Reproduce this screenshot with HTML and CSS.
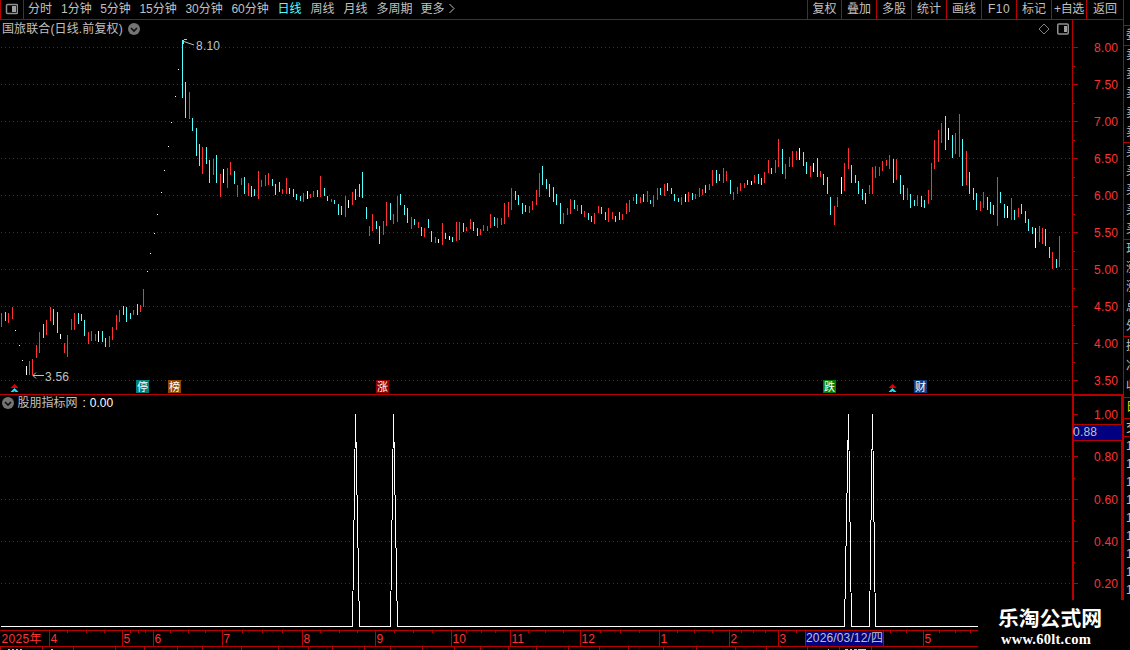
FILE: index.html
```
<!DOCTYPE html>
<html lang="zh-CN">
<head>
<meta charset="utf-8">
<title>国旅联合</title>
<link rel="stylesheet" href="styles.css">
</head>
<body>
<div class="app">
  <div class="terminal">
    <header class="toolbar">
      <div class="toggle"><svg width="13" height="12" viewBox="0 0 13 12"><rect x="1.5" y="1.5" width="11" height="9" rx="1" class="icon-frame"/><rect x="7" y="3" width="4" height="6" class="icon-fill"/></svg></div>
      <nav class="periods">
        <span class="w24">分时</span><span class="w30">1分钟</span><span class="w30">5分钟</span><span class="w37">15分钟</span><span class="w37">30分钟</span><span class="w37">60分钟</span><span class="w24 active">日线</span><span class="w24">周线</span><span class="w24">月线</span><span class="w36">多周期</span><span class="w24 more">更多</span>
        <svg class="chevron" width="6" height="11" viewBox="0 0 6 11"><path d="M0.5 1L5 5.5L0.5 10"/></svg>
      </nav>
      <nav class="actions"><span class="first">复权</span><span>叠加</span><span>多股</span><span>统计</span><span>画线</span><span class="latin">F10</span><span>标记</span><span class="tight">+自选</span><span class="last">返回</span></nav>
    </header>

    <section class="panel price">
      <svg class="plot" id="price" width="1123" height="375" viewBox="0 20 1123 375">
        <g id="price-grid"></g>
        <path class="axis" d="M1072.5 20V394M0 394.5H1123"/>
        <g id="bars"></g>
        <path class="pointer" d="M184 39.5H187M183.5 40V44M184 41.5L194 45M44 375.5H33M36 372.5L33 375.5L36 378.5"/>
        <text class="note" x="196" y="50" textLength="24">8.10</text>
        <text class="note" x="45" y="381" textLength="24">3.56</text>
        <g id="flags"></g>
        <g id="events"></g>
      </svg>
      <div class="caption">
        <span class="stock">国旅联合(日线.前复权)</span>
        <svg class="drop" width="12" height="12" viewBox="0 0 12 12"><circle cx="6" cy="6" r="6"/><path d="M3 5L6 8L9 5"/></svg>
        <svg class="diamond" width="12" height="12" viewBox="0 0 12 12"><path d="M6 1L11 6L6 11L1 6Z"/></svg>
        <svg width="12" height="12" viewBox="0 0 12 12"><rect x="0.75" y="1" width="10.5" height="10" rx="1" class="icon-frame"/><rect x="7" y="3" width="3" height="6" class="icon-fill"/></svg>
      </div>
    </section>

    <section class="panel signal">
      <svg class="plot" id="signal" width="1123" height="235" viewBox="0 395 1123 235">
        <g id="signal-grid"></g>
        <path class="axis thick" d="M1073 395V600M1122 395V600"/>
        <path class="axis" d="M1072 395.5H1123"/>
        <rect class="select" x="1074" y="425" width="48" height="15"/>
        <path class="axis" d="M1074 424.5H1122M1074 440.5H1122"/>
        <text class="value" x="1073" y="436" textLength="24">0.88</text>
        <polyline class="series" points="1,626.5 352.5,626.5 355.5,414 359.5,626.5 390.5,626.5 393.5,414 397.5,626.5 844.5,626.5 848.5,414 851.5,626.5 869.5,626.5 872.5,414 875.5,626.5 978,626.5"/>
      </svg>
      <div class="caption formula">
        <svg class="drop" width="12" height="12" viewBox="0 0 12 12"><circle cx="6" cy="6" r="6"/><path d="M3 5L6 8L9 5"/></svg>
        <span>股朋指标网</span><span class="colon">:</span><span class="result">0.00</span>
      </div>
    </section>

    <footer class="bottom">
      <svg class="plot" id="dates" width="978" height="20" viewBox="0 630 978 20">
        <path class="axis" d="M0 630.5H978M0 646.5H978"/>
        <g id="date-ticks"></g>
        <rect class="select" x="806" y="631" width="77" height="15"/>
        <text class="value" x="806" y="642" textLength="77">2026/03/12/四</text>
        <path class="sliver" d="M8 649.5H10M12 649.5H14M16 649.5H18M20 649.5H22M51 649.5H53M828 649.5H829"/>
        <path class="sliver cyan" d="M845 649.5H848M850 649.5H852M854 649.5H857M858 649.5H866"/>
      </svg>
    </footer>
  </div>

  <aside class="quotes">
    <div class="blank"></div>
    <div class="group one"><b>委</b></div>
    <div class="group five"><b>卖</b><b>卖</b><b>卖</b><b>卖</b><b>卖</b></div>
    <div class="group five"><b>买</b><b>买</b><b>买</b><b>买</b><b>买</b></div>
    <div class="group five"><b>现</b><b>涨</b><b>涨</b><b>总</b><b>外</b></div>
    <div class="group three"><b>换</b><b>净</b><b>收</b></div>
    <div class="group tab"><b>日</b></div>
    <div class="group head"><b>交</b></div>
    <div class="ticks"><b>1</b><b>1</b><b>1</b><b>1</b><b>1</b><b>1</b><b>1</b><b>1</b><b>1</b></div>
  </aside>

  <div class="brand"><div class="brand-name">乐淘公式网</div><div class="brand-url">www.60lt.com</div></div>
</div>
<script src="chart.js"></script>
</body>
</html>
```
FILE: styles.css
```
* { box-sizing: border-box; }
body {
  margin: 0;
  background: #000;
  color: #c0c0c0;
  font: 12px/16px "Liberation Sans", "Noto Sans CJK SC", sans-serif;
  overflow: hidden;
}
svg { display: block; flex: none; }
.app { position: relative; display: flex; width: 1130px; height: 650px; overflow: hidden; }
.terminal { width: 1123px; flex: none; }

.toolbar { display: flex; height: 20px; border-bottom: 1px solid #b80000; white-space: nowrap; }
.toggle { width: 24px; padding: 3px 0 0 4px; border: solid #b80000; border-width: 0 1px; }
.periods { display: flex; gap: 9px; padding: 1px 0 0 4px; }
.periods .w24 { width: 24px; }
.periods .w30 { width: 30.2px; }
.periods .w36 { width: 36px; }
.periods .w37 { width: 37px; }
.periods .active { color: #54ffff; }
.periods .more { margin-left: -1px; }
.chevron { margin: 2px 0 0 -4px; }
.chevron path { fill: none; stroke: #c0c0c0; }
.icon-frame { fill: none; stroke: #909090; stroke-width: 1.5; }
.icon-fill { fill: #a0a0a0; }
.actions { display: flex; margin-left: auto; }
.actions span { width: 35px; padding-top: 1px; border-left: 1px solid #b80000; text-align: center; }
.actions .first { width: 34px; }
.actions .latin { letter-spacing: .5px; }
.actions .tight { letter-spacing: -.3px; }
.actions .last { width: 37px; }

.panel { display: grid; }
.panel > * { grid-area: 1 / 1; }
.price { height: 375px; }
.signal { height: 235px; }
.caption { display: flex; align-items: center; align-self: start; height: 18px; padding-left: 2px; z-index: 1; }
.stock { width: 120px; margin-right: 6px; letter-spacing: .12px; white-space: nowrap; }
.drop circle { fill: #747474; }
.drop path { fill: none; stroke: #101010; stroke-width: 1.7; }
.diamond { margin: 0 7px 0 auto; }
.diamond path { fill: none; stroke: #808080; }
.price .caption { padding-right: 54px; }
.formula { height: 16px; }
.formula .drop { margin-right: 3.5px; }
.formula .colon { margin: 0 4px 0 5px; color: #fff; }
.formula .result { color: #fff; }

.axis { fill: none; stroke: #b80000; shape-rendering: crispEdges; }
.thick { stroke-width: 2; }
.grid { stroke: #a00808; stroke-dasharray: 1 3; shape-rendering: crispEdges; }
.up { fill: #ff3232; }
.down { fill: #54ffff; }
.flat { fill: #fff; }
.bar { shape-rendering: crispEdges; }
.scale { fill: #ff3232; font-size: 12px; }
.note, .value { fill: #c0c0c0; font-size: 12px; }
.pointer { fill: none; stroke: #c0c0c0; }
.select { fill: #000080; }
.series { fill: none; stroke: #fff; shape-rendering: crispEdges; }
.flag { fill: #fff; font: 11px "Noto Sans CJK SC", sans-serif; }
.sliver { stroke: #c0c0c0; shape-rendering: crispEdges; }
.cyan { stroke: #54ffff; }
.bottom { height: 20px; }

.quotes { width: 7px; height: 600px; border-left: 1px solid #b80000; overflow: hidden; }
.quotes b { display: block; flex: 1; width: 20px; padding-left: 2px; font-weight: 400; line-height: 18px; }
.blank { height: 25px; }
.group { display: flex; flex-direction: column; border-top: 1px solid #b80000; }
.one { height: 20px; }
.five { height: 97px; }
.three { height: 61px; }
.tab { height: 21px; }
.tab b { color: #e0e000; }
.head { height: 19px; border-bottom: 1px solid #b80000; }
.ticks b { height: 18px; }

.brand { position: absolute; left: 978px; top: 600px; width: 152px; height: 50px; padding: 7px 0 0 20px; color: #fff; white-space: nowrap; background: #000; }
.brand-name { font: bold 20.8px/21px "Noto Sans CJK SC", sans-serif; }
.brand-url { padding: 3px 0 0 3px; letter-spacing: .25px; font: bold 14.5px/16px "Liberation Serif", serif; }
```
FILE: chart.js
```
const NS = "http://www.w3.org/2000/svg";
function add(parent, name, attrs, text) {
  const el = document.createElementNS(NS, name);
  for (const key in attrs) el.setAttribute(key, attrs[key]);
  if (text !== undefined) el.textContent = text;
  document.getElementById(parent).appendChild(el);
}

// Each bar: column, high, low, direction (r = up, c = down, w = flat)
const bars = `
1 313 327 r,5 312 321 c,8 313 323 r,12 307 319 r,15 330 331 w,19 345 346 w,22 360 361 w,26 366 375 w,29 361 375 r,32 359 375 r,
36 345 358 r,39 332 353 r,43 324 338 c,46 320 335 r,50 307 321 r,53 309 325 c,57 312 333 c,60 334 339 w,64 343 353 r,67 335 357 r,
71 319 330 r,74 313 330 r,78 313 324 c,81 314 321 c,84 320 336 c,88 332 344 r,91 331 341 r,95 334 341 r,98 331 342 w,102 331 342 c,
105 338 347 c,109 336 347 r,112 327 340 r,116 315 330 r,119 310 322 r,123 306 315 c,126 307 322 c,130 313 319 c,133 310 315 r,137 304 315 c,
140 305 312 r,143 289 307 r,147 271 272 w,150 253 254 w,154 233 234 w,157 214 215 w,161 192 193 w,164 170 171 w,168 146 147 w,171 122 123 w,
175 96 97 w,178 69 70 w,182 40 98 c,185 82 118 c,189 92 119 r,192 118 131 c,196 128 156 c,199 144 166 c,202 147 174 r,206 147 164 c,
209 160 183 c,213 159 175 r,216 155 183 c,220 174 197 r,223 169 183 w,227 168 188 r,230 162 175 r,234 171 184 c,237 185 197 r,241 178 185 r,
244 177 194 c,248 183 196 r,251 186 197 c,254 189 196 c,258 171 199 r,261 180 187 r,265 175 186 r,268 173 185 r,272 179 186 c,275 184 195 c,
279 182 192 c,282 189 194 r,286 178 194 r,289 188 194 c,293 189 197 c,296 194 200 c,300 196 201 c,303 193 202 r,307 191 199 w,310 194 198 r,
313 191 197 r,317 190 197 c,320 176 197 r,324 188 196 c,327 196 201 c,331 199 202 r,334 200 204 c,338 204 215 c,341 206 215 c,345 196 217 r,
348 200 208 w,352 192 205 r,355 189 200 c,359 184 197 c,362 172 198 c,366 207 219 c,369 226 236 r,372 214 231 r,376 221 229 c,379 226 244 c,
383 221 235 r,386 202 226 r,390 203 220 c,393 214 224 r,397 196 222 r,400 194 205 c,404 205 215 c,407 208 223 c,411 217 229 r,414 219 225 c,
418 222 228 r,421 227 236 c,424 228 237 r,428 219 228 c,431 231 242 c,435 237 243 r,438 239 243 w,442 223 245 r,445 233 239 c,449 236 240 w,
452 237 242 c,456 222 241 r,459 222 240 r,463 223 232 c,466 227 231 r,470 219 229 r,473 222 231 c,477 228 236 c,480 229 235 r,483 225 231 r,
487 226 231 r,490 214 228 r,494 217 226 c,497 218 228 r,501 218 225 r,504 203 224 r,508 202 217 r,511 188 210 r,515 191 200 c,518 195 205 c,
522 203 214 c,525 205 212 c,529 206 213 r,532 201 210 r,536 190 205 r,539 173 197 r,542 166 185 c,546 179 189 c,549 184 197 c,553 187 202 c,
556 194 205 c,560 203 224 c,563 213 224 r,567 208 215 r,570 199 214 r,574 200 209 c,577 205 211 r,581 205 214 c,584 211 217 r,588 213 220 c,
591 216 222 c,594 213 224 r,598 206 213 r,601 207 214 c,605 212 220 c,608 208 222 r,612 212 219 r,615 216 222 c,619 212 220 c,622 214 220 r,
626 203 214 r,629 200 212 r,633 197 201 r,636 194 204 c,640 197 203 r,643 194 202 c,647 191 202 r,650 200 204 c,653 195 207 r,657 188 200 r,
660 188 195 c,664 184 196 r,667 183 191 c,671 188 194 c,674 194 201 c,678 198 202 c,681 197 205 r,685 194 202 w,688 192 202 r,692 193 200 c,
695 194 199 r,699 188 197 r,702 189 195 r,705 185 193 c,709 184 190 r,712 170 186 r,716 170 183 c,719 174 181 c,723 168 183 r,726 171 181 r,
730 180 194 c,733 192 200 r,737 187 194 r,740 183 191 r,744 183 188 r,747 180 185 c,751 181 185 w,754 175 183 r,758 174 184 c,761 178 185 c,
764 172 183 r,768 160 173 r,771 168 174 c,775 160 173 r,778 139 167 r,782 149 174 c,785 164 179 r,789 157 167 r,792 151 167 r,796 151 160 r,
799 148 160 w,803 152 166 c,806 162 174 c,810 166 177 r,813 163 172 w,817 158 177 c,820 171 177 r,823 174 185 c,827 177 194 c,830 197 215 c,
834 206 225 r,837 197 207 r,841 177 194 w,844 163 191 r,848 148 169 r,851 165 183 c,855 175 183 c,858 181 194 c,862 189 200 c,865 193 204 c,
869 185 194 r,872 167 194 r,875 166 178 r,879 167 176 r,882 161 171 r,886 160 166 r,889 155 169 r,893 159 183 c,896 159 180 r,900 175 194 c,
903 185 200 c,907 188 200 r,910 194 208 c,914 200 206 c,917 195 206 r,921 196 207 c,924 200 208 c,928 190 204 r,931 163 200 r,934 140 169 r,
938 130 162 r,941 123 143 r,945 116 150 c,948 128 140 w,952 135 158 c,955 133 154 r,959 114 157 r,962 139 186 c,966 151 185 r,969 172 194 c,
973 188 200 c,976 193 210 c,980 201 211 r,983 192 208 r,987 197 210 c,990 202 214 c,993 205 215 c,997 177 226 r,1000 192 203 c,1004 204 218 c,
1007 206 218 w,1011 198 220 r,1014 210 220 c,1018 208 217 r,1021 204 214 c,1025 211 223 c,1028 219 231 c,1032 227 234 c,1035 228 248 w,
1039 226 242 r,1042 228 244 r,1045 229 246 c,1049 247 258 c,1052 252 269 r,1056 259 268 c,1059 236 267 r`;
const tone = { r: "up", c: "down", w: "flat" };
for (const item of bars.trim().split(/,\s*/)) {
  const [x, top, bottom, kind] = item.split(" ");
  add("bars", "rect", { x, y: top, width: 1, height: bottom - top, class: "bar " + tone[kind] });
}

// Dotted grid rows with their scale labels
function scaleRow(group, y, label, dotted) {
  if (dotted) add(group, "path", { d: `M1 ${y + .5}H1072`, class: "grid" });
  add(group, "path", { d: `M1073 ${y + .5}H1078`, class: "axis" });
  add(group, "text", { x: 1094, y: y + 5, textLength: 24, class: "scale" }, label);
}
for (let i = 0; i < 10; i++) {
  scaleRow("price-grid", 47 + i * 37, (8 - i * .5).toFixed(2), true);
  if (i < 9) add("price-grid", "path", { d: `M1073 ${66.5 + i * 37}H1075`, class: "axis" });
}
[[414, "1.00"], [456, "0.80"], [499, "0.60"], [541, "0.40"], [583, "0.20"]]
  .forEach(([y, label], i) => scaleRow("signal-grid", y, label, i > 0));
for (const y of [478, 520, 562]) add("signal-grid", "path", { d: `M1073 ${y + .5}H1075`, class: "axis" });

// Event flags
[[136, "停", "#008080"], [168, "榜", "#904800"], [376, "涨", "#900000"], [823, "跌", "#008000"], [914, "财", "#104080"]]
  .forEach(([x, label, fill]) => {
    add("flags", "rect", { x, y: 380, width: 13, height: 13, fill });
    add("flags", "text", { x: x + 1, y: 391, class: "flag" }, label);
  });
for (const x of [14, 892]) {
  add("events", "path", { d: `M${x + .5} 384L${x + 4.5} 388H${x - 3.5}Z`, fill: "#e00000" });
  add("events", "path", { d: `M${x + .5} 388L${x + 4.5} 392H${x + 1.5}L${x + .5} 391L${x - .5} 392H${x - 3.5}Z`, fill: "#30d8f0" });
}

// Date axis
const months = [[0, "2025年", 40], [49, "4"], [122, "5"], [153, "6"], [222, "7"], [302, "8"], [375, "9"], [451, "10"],
  [510, "11"], [580, "12"], [659, "1"], [729, "2"], [778, "3"], [805], [883], [923, "5"]];
for (const [x, label, length] of months) {
  if (x) add("date-ticks", "path", { d: `M${x + .5} 631V646`, class: "axis" });
  if (label) add("date-ticks", "text", { x: x + 1.5, y: 643, class: "scale", ...(length && { textLength: length }) }, label);
}
for (const x of [67, 86, 104, 130, 138, 145, 170, 188, 205, 242, 262, 282, 320, 339, 357, 394, 413, 432, 466, 481, 495,
  528, 545, 563, 600, 620, 639, 677, 694, 712, 741, 753, 765, 796, 890, 906, 939, 955, 970])
  add("date-ticks", "path", { d: `M${x + .5} 631V633`, class: "axis" });
for (const x of [0, 42, 73, 115, 144, 177, 202, 241, 278, 308, 332, 364, 390, 422, 454, 480, 508, 536, 568, 599, 628, 663,
  696, 735, 766, 807, 839, 871])
  add("date-ticks", "path", { d: `M${x + .5} 647V650`, class: "axis" });
```
